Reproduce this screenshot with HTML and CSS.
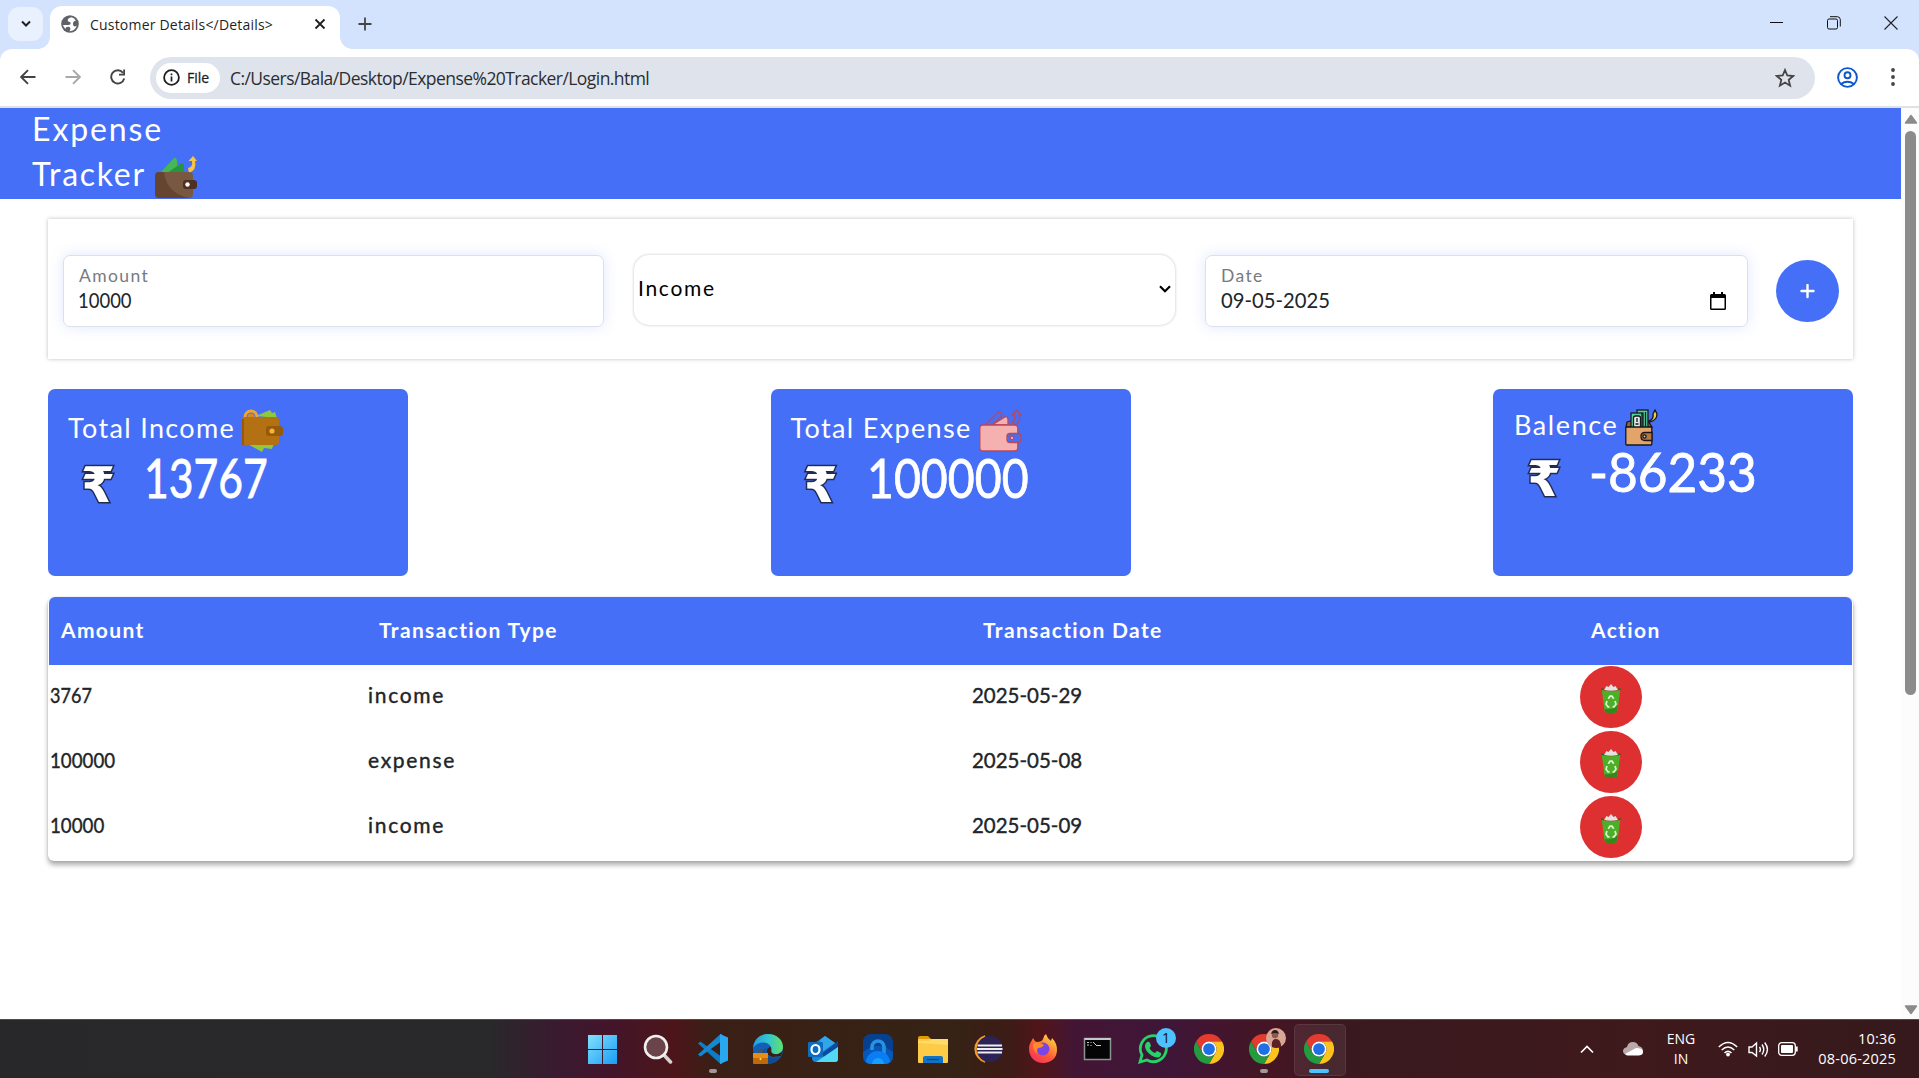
FILE: index.html
```html
<!DOCTYPE html>
<html lang="en">
<head>
<meta charset="utf-8">
<title>Customer Details</title>
<link rel="stylesheet" href="styles.css">
</head>
<body>
<svg class="defs" aria-hidden="true">
  <symbol id="chrome" viewBox="0 0 48 48">
    <path fill="#e33b2e" d="M3.2 12A24 24 0 0 1 44.8 12H24A12 12 0 0 0 13.6 30Z"/>
    <path fill="#fcc31e" d="M44.8 12A24 24 0 0 1 24 48L34.4 30A12 12 0 0 0 24 12Z"/>
    <path fill="#249a41" d="M24 48A24 24 0 0 1 3.2 12L13.6 30A12 12 0 0 0 34.4 30Z"/>
    <circle cx="24" cy="24" r="12" fill="#fff"/><circle cx="24" cy="24" r="9.4" fill="#1f6fe5"/>
  </symbol>
  <symbol id="bin" viewBox="0 0 20 30">
    <path d="M0 4q10 4.500 20 0l-1 2.500H1z" fill="#1c6a1e"/>
    <path d="M3 6L5.500 2l2 1 2.500-3 2.500 3 2-1L17 6q-7 1.500-14 0z" fill="#e2e2e2"/>
    <path d="M.8 6q9.200 2.500 18.400 0L16.500 27q-.3 2-6.500 2t-6.500-2z" fill="#4caf27"/>
    <path d="M4 25q8 1.500 13-4l-.7 6q-.3 2-6.300 2t-6.300-2z" fill="#38841d"/>
    <path d="M7.300 14.800l1.700-2.600h2l1.700 2.600M14 17l1 3.200-2 2.600h-1.500M8.500 22.800H7L5 20.200 6 17" fill="none" stroke="#d9f5cf" stroke-width="1.700"/>
  </symbol>
</svg>
<div class="window">
  <div class="tabstrip">
    <div class="tab-search"><svg width="12" height="8" viewBox="0 0 12 8"><path d="M2 1.500l4 4 4-4" fill="none" stroke="#1f1f1f" stroke-width="2"/></svg></div>
    <div class="tab">
      <svg class="globe" width="18" height="18" viewBox="0 0 20 20"><circle cx="10" cy="10" r="9.800" fill="#5f6368"/><path d="M12 2.500Q7 3.500 7.500 6.500q.5 1.500 3 1.500 1 3-2.500 3H2.200Q3 14 5 15.500q0-2.500 3-2.500 2.500 0 2.500 2.500l-1 2.500q6 0 8-6-3 1.500-4-.5-1-3 1-4.500l2-.5q-1.500-3-4.500-4z" fill="#fff"/></svg>
      <span class="tab-title">Customer Details&lt;/Details&gt;</span>
      <svg class="tab-close" width="12" height="12" viewBox="0 0 12 12"><path d="M1.500 1.500l9 9m0-9l-9 9" stroke="#1f1f1f" stroke-width="1.800"/></svg>
    </div>
    <svg class="new-tab" width="14" height="14" viewBox="0 0 14 14"><path d="M7 .5v13M.5 7h13" stroke="#444" stroke-width="1.800"/></svg>
    <div class="window-controls">
      <svg width="14" height="14" viewBox="0 0 14 14"><path d="M0 6.500h13" stroke="#111"/></svg>
      <svg width="14" height="14" viewBox="0 0 14 14"><rect x=".5" y="3" width="10" height="10" rx="1.500" fill="none" stroke="#111"/><path d="M3 .7h7.500a3 3 0 0 1 2.800 2.800V10.500" fill="none" stroke="#111"/></svg>
      <svg width="14" height="14" viewBox="0 0 14 14"><path d="M.5 .5l13 13m0-13l-13 13" stroke="#222" stroke-width="1.100"/></svg>
    </div>
  </div>
  <div class="toolbar">
    <div class="nav-icons">
      <svg width="16" height="16" viewBox="0 0 16 16"><path d="M15.500 8H2M8 1.200L1.200 8 8 14.800" fill="none" stroke="#444" stroke-width="1.900"/></svg>
      <svg width="16" height="16" viewBox="0 0 16 16"><path d="M.5 8H14M8 1.200L14.800 8 8 14.800" fill="none" stroke="#a8a8a8" stroke-width="1.900"/></svg>
      <svg width="16" height="16" viewBox="0 0 16 16"><path d="M14.200 9.500A6.600 6.600 0 1 1 13 3.800" fill="none" stroke="#444" stroke-width="1.900"/><path d="M15 .5v6H9V4.700h4.200V.5z" fill="#444"/></svg>
    </div>
    <div class="omnibox">
      <div class="chip"><svg width="17" height="17" viewBox="0 0 17 17"><circle cx="8.500" cy="8.500" r="7.400" fill="none" stroke="#1f1f1f" stroke-width="1.800"/><path d="M8.500 7.500v5M8.500 4.400v1.800" stroke="#1f1f1f" stroke-width="1.700"/></svg><span>File</span></div>
      <span class="url">C:/Users/Bala/Desktop/Expense%20Tracker/Login.html</span>
      <svg class="star" width="20" height="20" viewBox="0 0 20 20"><path d="M10 2l2.300 5.500 5.900.5-4.500 3.900 1.400 5.800L10 14.600l-5.100 3.100 1.400-5.800L1.800 8l5.900-.5z" fill="none" stroke="#444" stroke-width="1.800"/></svg>
    </div>
    <svg class="profile" width="21" height="21" viewBox="0 0 21 21"><g fill="none" stroke="#0b57d0" stroke-width="1.900"><circle cx="10.500" cy="10.500" r="9.400"/><circle cx="10.500" cy="8.200" r="3"/><path d="M4 17q6.500-4.500 13 0"/></g></svg>
    <svg class="kebab" width="4" height="18" viewBox="0 0 4 18"><g fill="#444"><circle cx="2" cy="2" r="1.900"/><circle cx="2" cy="9" r="1.900"/><circle cx="2" cy="16" r="1.900"/></g></svg>
  </div>
  <div class="viewport">
    <main class="page">
      <header class="site-header">
        <div class="brand"><span class="brand-a">Expense</span>
          <div class="brand-line"><span class="brand-b">Tracker</span>
          <svg class="brand-icon" width="42" height="42" viewBox="0 0 42 42"><path d="M6 16L19 2q2-1 3 2l1 12z" fill="#43b854"/><path d="M12 17L27 7q2 0 2 3v7z" fill="#26953c"/><path d="M33 12q5-1 4-7h-3.500L38 0l4 5h-2q2 9-6 12z" fill="#f9c440"/><rect y="16" width="38" height="26" rx="4" fill="#785840"/><path d="M4 16h5q2 20 24 26H4q-4 0-4-4V20q0-4 4-4z" fill="#65452f"/><rect x="28" y="24" width="14" height="9" rx="3" fill="#4d3020"/><circle cx="32.500" cy="28.500" r="2.200" fill="#fff"/></svg></div>
        </div>
      </header>
      <section class="entry-form">
        <div class="field"><span class="label">Amount</span><span class="value value-amount">10000</span></div>
        <div class="select"><span>Income</span><svg width="12" height="8" viewBox="0 0 12 8"><path d="M1 1.200l5 5 5-5" fill="none" stroke="#000" stroke-width="2.200"/></svg></div>
        <div class="field"><span class="label">Date</span><span class="value value-date">09-05-2025</span>
          <svg class="calendar" width="16" height="18" viewBox="0 0 16 18"><path d="M3 0h2v2h6V0h2v2h1.500Q16 2 16 3.500v13q0 1.500-1.500 1.500h-13Q0 18 0 16.500v-13Q0 2 1.500 2H3zM1.500 6v10.500h13V6z" fill="#000" fill-rule="evenodd"/></svg></div>
        <div class="add"><svg width="15" height="15" viewBox="0 0 15 15"><path d="M7.500 1v12M1.500 7h12" stroke="#fff" stroke-width="2.400" stroke-linecap="round"/></svg></div>
      </section>
      <section class="cards">
        <div class="card">
          <div class="card-title"><span>Total Income</span>
          <svg width="41" height="44" viewBox="0 0 41 44"><path d="M14 7L28 1l2 3 3-1 2 6zM4 34L20 43l2-4 8 1 2-6z" fill="#8fc93a"/><circle cx="9" cy="8" r="6" fill="none" stroke="#f2a52b" stroke-width="3"/><circle cx="9" cy="8" r="3.500" fill="#d98a1c"/><rect y="8" width="37" height="28" rx="3" fill="#b37114"/><path d="M0 10h2v26H0z" fill="#955a0c"/><rect x="24" y="17" width="17" height="10" rx="3" fill="#955a0c"/><circle cx="30" cy="22" r="2.600" fill="#f9b233"/></svg></div>
          <div class="card-amount"><span class="rupee">₹</span><span class="num num-income">13767</span></div>
        </div>
        <div class="card">
          <div class="card-title"><span class="title-expense">Total Expense</span>
          <svg width="43" height="44" viewBox="0 0 43 44"><g stroke="#b9475c" stroke-width="1.300"><path d="M6 16L19 3q3-1 4 4l-10 9" fill="none"/><path d="M13 16L26 8q3-1 3 3v5z" fill="#f5b0b0"/><path d="M33 13q4-2 2.500-7H33L37.500.8 42 6h-2q2 6-3 9-2 1-4-2z" fill="none"/><rect x=".8" y="16" width="38" height="26" rx="3" fill="#f5b0b0"/><rect x="28" y="24.500" width="14" height="9" rx="3" fill="#466ff7"/><circle cx="33" cy="29" r="1.800" fill="#f5b0b0"/></g></svg></div>
          <div class="card-amount"><span class="rupee">₹</span><span class="num num-expense">100000</span></div>
        </div>
        <div class="card card-balance">
          <div class="card-title"><span>Balence</span>
          <svg width="33" height="37" viewBox="0 0 33 37"><g stroke="#17171d" stroke-width="1.300"><path d="M2 13l7-2 14 1 4 6H1z" fill="#9a6238"/><rect x="12" y="1" width="11" height="19" fill="#55cf9d"/><rect x="6" y="4" width="12" height="17" fill="#55cf9d"/><rect x="8.500" y="7" width="7" height="12" rx="2" fill="#dfe9e6"/><path d="M17 4v14M20.500 3v15M12 9v4M10.500 15h3" fill="none"/><path d="M24 12q5-2 4-7l2-4 2 4q0 6-7 8z" fill="#f7cf45"/><rect x=".8" y="18" width="26" height="18" rx="1" fill="#e2a468"/><path d="M27 23.500H20q-4 0-4 4t4 4h7z" fill="#b9763f"/><circle cx="19.500" cy="27.500" r="1.600" fill="#ccc"/></g></svg></div>
          <div class="card-amount"><span class="rupee">₹</span><span class="num num-balance">-86233</span></div>
        </div>
      </section>
      <section class="transactions">
        <div class="row head"><span>Amount</span><span>Transaction Type</span><span>Transaction Date</span><span>Action</span></div>
        <div class="row"><span class="n n-short">3767</span><span>income</span><span class="d">2025-05-29</span><span class="delete"><svg width="20" height="30"><use href="#bin"/></svg></span></div>
        <div class="row"><span class="n">100000</span><span>expense</span><span class="d">2025-05-08</span><span class="delete"><svg width="20" height="30"><use href="#bin"/></svg></span></div>
        <div class="row"><span class="n">10000</span><span>income</span><span class="d">2025-05-09</span><span class="delete"><svg width="20" height="30"><use href="#bin"/></svg></span></div>
      </section>
    </main>
    <div class="scrollbar">
      <svg width="14" height="10" viewBox="0 0 14 10"><path d="M7 1.500L12.500 9h-11z" fill="#8b8b8b" stroke="#8b8b8b" stroke-width="1.500" stroke-linejoin="round"/></svg>
      <div class="thumb"></div>
      <svg class="down" width="14" height="10" viewBox="0 0 14 10"><path d="M7 8.500L12.500 1h-11z" fill="#8b8b8b" stroke="#8b8b8b" stroke-width="1.500" stroke-linejoin="round"/></svg>
    </div>
  </div>
</div>
<footer class="taskbar">
  <div class="apps">
    <div class="app"><svg width="30" height="30" viewBox="0 0 30 30"><defs><linearGradient id="win" x1="0" y1="0" x2="1" y2="1" gradientUnits="objectBoundingBox"><stop stop-color="#83e0fd"/><stop offset="1" stop-color="#189df5"/></linearGradient></defs><path fill="url(#win)" d="M0 1h14v14H0zM15 1h14v14H15zM0 16h14v14H0zM15 16h14v14H15z"/></svg></div>
    <div class="app"><svg width="30" height="30" viewBox="0 0 30 30"><path d="M21 21l6.500 7" stroke="#d5d5d5" stroke-width="3.500" stroke-linecap="round"/><circle cx="13" cy="13" r="11" fill="#6a4449" stroke="#f0f0f0" stroke-width="2.600"/></svg></div>
    <div class="app"><svg width="30" height="30" viewBox="0 0 30 30"><path d="M22 0L30 3.500v23L22 30z" fill="#29a8f0"/><path d="M0 9.500l2.500-2L22.500 22v8z" fill="#0d7cc4"/><path d="M0 20.500l2.500 2L22.500 8V0z" fill="#1588d1"/><path d="M22 0l2 .8v28.400L22 30z" fill="#29a8f0"/></svg><i class="dot"></i></div>
    <div class="app"><svg width="30" height="30" viewBox="0 0 30 30"><defs><linearGradient id="edge"><stop stop-color="#249be0"/><stop offset=".5" stop-color="#32c5cf"/><stop offset="1" stop-color="#65e068"/></linearGradient></defs><circle cx="15" cy="15" r="15" fill="#1160b8"/><path d="M0 14C1 4 8 0 15 0c9 0 15 6 15 13 0 6-5 8-9 7-5-1-1-3-3-7C15 7 5 7 0 14z" fill="url(#edge)"/><path d="M13 14c-3 6 3 12 14 9-3 5-8 7-12 7-8-1-8-13-2-16z" fill="#104c91"/><path d="M18 13c-6 0-6 9 2 10l8-1 2-6q-3 5-9 4-4-1-3-7z" fill="#3a1e14"/><rect y="19" width="15" height="11" rx="1" fill="#bf6a08"/><path d="M0 19h15v5H0z" fill="#e88d12"/><path d="M5 19v-2h5v2" fill="none" stroke="#7d430a"/><circle cx="7.500" cy="25" r="1" fill="#ffe37c"/></svg></div>
    <div class="app"><svg width="30" height="30" viewBox="0 0 30 30"><path d="M4 11L17 2l13 9v14q0 3-3 3H8q-4 0-4-4z" fill="#1588d8"/><path d="M12 6l5-4 10 7-12 8z" fill="#2fa7ea"/><path d="M13 20L30 7v6L17 24z" fill="#0b4aa0"/><path d="M30 13v12q0 3-3 3H8z" fill="#53d8f5"/><rect y="8" width="15" height="15" rx="1" fill="#0f6cbd"/><ellipse cx="7.500" cy="15.500" rx="4" ry="4.500" fill="none" stroke="#fff" stroke-width="2.200"/></svg></div>
    <div class="app"><svg width="30" height="30" viewBox="0 0 30 30"><rect width="30" height="30" rx="8" fill="#06408f"/><path d="M0 18L9 12h12l9 6v4q0 8-8 8H8q-8 0-8-8z" fill="#0657b8"/><path d="M9 16v-3a6 6 0 0 1 12 0v8" fill="none" stroke="#2494e2" stroke-width="3.600"/><path d="M3 28a12 11 0 0 1 24 0q-2 2-5 2H8q-3 0-5-2z" fill="#0b7df2"/><path d="M9 30a6 6 0 0 1 12 0z" fill="#14a0ff"/></svg></div>
    <div class="app"><svg width="30" height="30" viewBox="0 0 30 30"><path d="M0 4q0-2 2-2h8l3 3v4H0z" fill="#e09b0b"/><rect y="5" width="30" height="24" rx="1" fill="#fdcb45"/><path d="M0 9V7h11l3-2H30v6z" fill="#ffdb69"/><path d="M5 29v-5q0-2 2-2h16q2 0 2 2v5z" fill="#1173c5"/><path d="M9 25.500h12" stroke="#0b4c88" stroke-width="1.300"/></svg></div>
    <div class="app"><svg width="30" height="30" viewBox="0 0 30 30"><path d="M12 2a13.500 13.500 0 0 0 0 26A15 15 0 0 1 12 2z" fill="#f59b2d" stroke="#f59b2d" stroke-width="1.500"/><circle cx="16.800" cy="15" r="13.100" fill="#2c2255"/><path d="M4.500 11.500h24.500M4 15h25.500M4.500 18.500h24.500" stroke="#eee" stroke-width="2"/></svg></div>
    <div class="app"><svg width="30" height="30" viewBox="0 0 30 30"><defs><linearGradient id="fox" x1="0" y1="1" x2=".7" y2="0"><stop stop-color="#f1246b"/><stop offset=".5" stop-color="#ff5c35"/><stop offset="1" stop-color="#ffd33d"/></linearGradient></defs><path d="M1 15C1 9 4 7 5 4q1 3 4 4 5 0 6-3 1-4 3-5 1 4 5 7l1-3c4 4 5 8 5 12 0 8-6 13-14 13S1 23 1 15z" fill="url(#fox)"/><circle cx="15" cy="15" r="6.500" fill="#7a45e5"/><path d="M5 10q6-3 11 1-2 3-6 3-2 3 0 6-6-3-5-10z" fill="#ff8a2b"/></svg></div>
    <div class="app"><svg width="30" height="30" viewBox="0 0 30 30"><rect x="1.500" y="4.500" width="26" height="21" fill="#050505" stroke="#8d9295" stroke-width="1.500"/><path d="M1.500 5h26" stroke="#c5c9cb" stroke-width="2"/><path d="M4 8.500h2M4 11h2M8 8v1M8 11v1M10 8l3 3M13 11.500h5" stroke="#ccc" stroke-width="1"/></svg></div>
    <div class="app"><svg width="30" height="30" viewBox="0 0 30 30"><path d="M2 28l2-7a13 13 0 1 1 5 5z" fill="none" stroke="#25d366" stroke-width="2.800"/><path d="M9 8q2-1 3 1l1 3-1.500 2q2 4 5.500 5l2-2 4 2q1 2-1.500 4-3 1.500-8-1.500-7-5-6.500-10 .5-2.500 2-3.500z" fill="#25d366"/></svg><b class="badge">1</b></div>
    <div class="app"><svg width="30" height="30"><use href="#chrome"/></svg></div>
    <div class="app"><svg width="30" height="30"><use href="#chrome"/></svg><svg class="avatar" width="20" height="20" viewBox="0 0 20 20"><circle cx="10" cy="10" r="10" fill="#d8a596"/><path d="M6 19q-1-8 4-8t5 8q-5 2-9 0z" fill="#5a2024"/><circle cx="9" cy="7" r="3.200" fill="#8c5a48"/><path d="M5 6q1-4 4-4t4 4q-4-2-8 0z" fill="#2d1a1a"/></svg><i class="dot"></i></div>
    <div class="app active"><svg width="30" height="30"><use href="#chrome"/></svg><i class="dot wide"></i></div>
  </div>
  <div class="tray">
    <svg class="chevron" width="14" height="9" viewBox="0 0 14 9"><path d="M1 7.500l6-6 6 6" fill="none" stroke="#fff" stroke-width="1.700"/></svg>
    <svg class="cloud" width="20" height="14" viewBox="0 0 20 14"><path d="M4 13q-4-1-4-4t4-4q1-5 6-5 4 0 5.500 4Q20 5 20 9t-4 4z" fill="#b9a9aa"/><path d="M2 12l11-6q7 0 7 4 0 3-4 3.500H4z" fill="#fff"/></svg>
    <div class="lang">ENG<br>IN</div>
    <svg class="wifi" width="20" height="16" viewBox="0 0 20 16"><g fill="none" stroke="#fff" stroke-width="1.500"><path d="M.8 6Q10-3 19.200 6M3.700 9q6.300-6 12.600 0M6.500 12q3.500-3.500 7 0"/></g><circle cx="10" cy="13.500" r="1.900" fill="#fff"/></svg>
    <svg class="speaker" width="21" height="17" viewBox="0 0 21 17"><g fill="none" stroke="#fff" stroke-width="1.400"><path d="M1 6h3l4.500-4v13L4 11.500H1z"/><path d="M11.500 6q1.800 2.500 0 5M14 3.500q3.500 5 0 10M16.700 1.500q5.500 7 0 14"/></g></svg>
    <svg class="battery" width="20" height="14" viewBox="0 0 20 14"><rect x=".7" y=".7" width="16.600" height="12.600" rx="3" fill="none" stroke="#fff" stroke-width="1.300"/><rect x="3" y="3" width="12" height="8" rx="1" fill="#fff"/><path d="M18.800 4.500v5" stroke="#fff" stroke-width="1.800"/></svg>
    <div class="clock">10:36<br>08-06-2025</div>
  </div>
</footer>
</body>
</html>
```
FILE: styles.css
```css
* { box-sizing: border-box; }
body { margin: 0; width: 1919px; height: 1078px; overflow: hidden; display: flex; flex-direction: column; font-family: "Lato", sans-serif; background: #fff; }
svg { display: block; flex: none; }
span { white-space: nowrap; }
.defs { position: absolute; width: 0; height: 0; }

/* browser window */
.window { height: 1019px; background: #d3e2fd; }
.tabstrip, .toolbar { font-family: "Open Sans", sans-serif; }
.tabstrip { height: 49px; display: flex; align-items: flex-start; padding: 6px 21px 0 8px; }
.tab-search { width: 35px; height: 34px; margin-top: 1px; border-radius: 11px; background: #e9f0fe; display: flex; align-items: center; justify-content: center; }
.tab { position: relative; width: 290px; height: 43px; margin-left: 7px; padding: 0 14px 7px 11px; background: #fff; border-radius: 12px 12px 0 0; display: flex; align-items: center; }
.tab::before, .tab::after { content: ""; position: absolute; bottom: 0; width: 12px; height: 12px; }
.tab::before { left: -12px; background: radial-gradient(circle at 0 0, transparent 11.5px, #fff 12px); }
.tab::after { right: -12px; background: radial-gradient(circle at 100% 0, transparent 11.5px, #fff 12px); }
.tab-title { margin-left: 11px; font-size: 14px; letter-spacing: .2px; color: #1f1f1f; }
.tab-close { margin-left: auto; }
.new-tab { margin: 11px 0 0 18px; }
.window-controls { display: flex; gap: 43px; margin: 10px 0 0 auto; }
.toolbar { height: 59px; display: flex; align-items: center; padding: 0 25px 1px 20px; background: #fff; border-bottom: 2px solid #dfe1e4; border-radius: 12px 12px 0 0; }
.nav-icons { display: flex; gap: 29px; }
.omnibox { flex: 1; height: 42px; margin: 1px 22px 0 24px; padding: 0 20px 0 6px; border-radius: 21px; background: #dfe4ec; display: flex; align-items: center; }
.chip { width: 64px; height: 30px; padding-left: 7px; display: flex; align-items: center; gap: 7px; border-radius: 15px; background: #fff; font-size: 14px; color: #1f1f1f; }
.chip span { -webkit-text-stroke: .3px; }
.url { margin: 1px 0 0 10px; font-size: 17.5px; letter-spacing: -.56px; color: #2b2d30; }
.star { margin-left: auto; }
.kebab { margin-left: 33px; margin-right: -1px; }
.viewport { height: 911px; display: flex; background: #fff; }
.page { width: 1901px; }
.scrollbar { width: 18px; background: #fcfcfc; display: flex; flex-direction: column; align-items: center; padding: 6px 0 4px 1px; }
.thumb { width: 11px; height: 564px; margin-top: 7px; border-radius: 6px; background: #8b8b8b; }
.down { margin-top: auto; }

/* page */
.site-header { display: flex; height: 91px; padding-left: 32px; background: #466ff7; color: #fff; }
.brand { margin-top: -2px; font-size: 32px; line-height: 45px; }
.brand-a { letter-spacing: 1.9px; }
.brand-b { letter-spacing: 1.7px; }
.brand-line { display: flex; }
.brand-icon { margin: 5px 0 0 9px; }
.entry-form { display: grid; grid-template-columns: 541px 541px 543px 63px; column-gap: 30px; height: 140px; margin: 20px 48px 0; padding: 36px 14px 0 15px; box-shadow: 0 0 4px rgba(0,0,0,.26); }
.field { position: relative; height: 72px; padding: 8px 0 0 15px; display: flex; flex-direction: column; align-items: flex-start; border: 1px solid #dbe0ea; border-radius: 7px; box-shadow: 0 0 14px rgba(70,111,247,.16); line-height: 24px; }
.label { font-size: 17.5px; letter-spacing: 1.4px; color: #777b80; }
.value { font-size: 22px; color: #212529; transform-origin: left; }
.value-amount { margin-left: -1px; transform: scaleX(.84); }
.value-date { transform: scaleX(.92); }
.calendar { position: absolute; right: 21px; bottom: 16px; }
.select { height: 70px; padding: 0 4px 3px 4px; display: flex; align-items: center; justify-content: space-between; border-radius: 15px; box-shadow: 0 0 3px rgba(0,0,0,.25); font-size: 21px; letter-spacing: 1.7px; color: #000; }
.select span { margin-top: -2px; }
.add { width: 63px; height: 62px; margin: 5px 0 0 -2px; border-radius: 50%; background: #466ff7; display: flex; align-items: center; justify-content: center; }
.cards { display: flex; justify-content: space-between; margin: 30px 48px 0; }
.card { width: 360px; height: 187px; padding: 20px 20px 0; border-radius: 7px; background: #466ff7; color: #fff; }
.card-title { display: flex; height: 43px; font-size: 27px; line-height: 38px; letter-spacing: 1.35px; }
.card-title svg { margin-left: 7px; }
.card-amount { display: flex; height: 66px; margin-top: -7px; padding-left: 12px; line-height: 66px; }
.rupee { width: 36px; text-align: center; font: bold 49px/66px "DejaVu Sans", sans-serif; -webkit-text-stroke: 3px #222c50; paint-order: stroke fill; margin-top: 8px; }
.num { margin-left: 28px; font-size: 54px; transform-origin: left; -webkit-text-stroke: .8px #fff; }
.num-income { transform: scaleX(.79); }
.num-expense { transform: scaleX(.86); }
.num-balance { transform: scaleX(.95); }
.card-balance { padding-left: 21px; }
.card-balance .card-title { height: 38px; line-height: 32px; letter-spacing: 1.6px; }
.card-balance .card-amount { margin-top: -8px; }
.card-balance .num { margin-left: 27px; }
.transactions { margin: 21px 48px 0; padding: 0 1px 1px; border-radius: 6px; box-shadow: 0 4px 5px rgba(0,0,0,.32), 0 0 2px rgba(0,0,0,.15); }
.row { display: grid; grid-template-columns: 318px 604px 608px 273px; height: 65px; padding-left: 1px; font-size: 21px; line-height: 59px; letter-spacing: 1.7px; color: #212529; -webkit-text-stroke: .4px; }
.head { height: 68px; padding-left: 12px; border-radius: 6px 6px 0 0; background: #466ff7; color: #fff; font-weight: 700; line-height: 65px; letter-spacing: 1.35px; -webkit-text-stroke: 0; }
.n, .d { font-size: 22px; letter-spacing: 0; transform-origin: left; }
.n { transform: scaleX(.85); }
.n-short { transform: scaleX(.82); }
.d { transform: scaleX(.93); }
.delete { width: 62px; height: 62px; margin-top: 1px; border-radius: 50%; background: #de2f31; display: flex; align-items: center; justify-content: center; padding: 4px 1px 0 0; }

/* taskbar */
.taskbar { position: relative; display: flex; height: 59px; padding-left: 575px; border-top: 1px solid #534a4a; color: #fff; font-family: "Open Sans", sans-serif; background: linear-gradient(90deg, #28282a 0, #29282a 490px, #3a1a30 560px, #43152b 610px, #4c1519 675px, #3a1f16 710px, #352315 950px, #3d1b16 1010px, #511519 1040px, #431535 1075px, #3f1638 1170px, #451524 1270px, #39191f 1350px, #3f191c 1640px, #35191c 1919px); }
.apps { display: flex; }
.app { position: relative; width: 55.1px; height: 58px; display: flex; align-items: center; justify-content: center; }
.dot { position: absolute; bottom: 5px; left: 24px; width: 8px; height: 4px; border-radius: 2px; background: #a3979a; }
.dot.wide { left: 18px; width: 20px; background: #4cc2ff; }
.badge { position: absolute; left: 30px; top: 8px; width: 20px; height: 20px; border-radius: 50%; background: #4cc2ff; color: #111; font-size: 14px; font-weight: 400; line-height: 20px; text-align: center; }
.avatar { position: absolute; left: 30px; top: 8px; }
.active::before { content: ""; position: absolute; left: 3px; top: 4px; width: 50px; height: 50px; border: 1px solid rgba(255,255,255,.08); border-radius: 5px; background: rgba(255,255,255,.07); }
.active svg { position: relative; }
.tray { display: flex; align-items: center; margin-left: auto; padding: 0 23px 0 0; font-size: 14.5px; line-height: 20px; }
.cloud { margin-left: 29px; margin-right: 1px; }
.chevron { margin-top: 1px; }
.lang { width: 32px; margin: 0 0 1px 21px; text-align: center; font-size: 14px; }
.wifi { margin-left: 21px; }
.speaker { margin-left: 10px; }
.battery { margin-left: 9px; }
.clock { width: 78px; margin: 0 0 1px 20px; display: block; text-align: right; white-space: nowrap; letter-spacing: .2px; }
```
